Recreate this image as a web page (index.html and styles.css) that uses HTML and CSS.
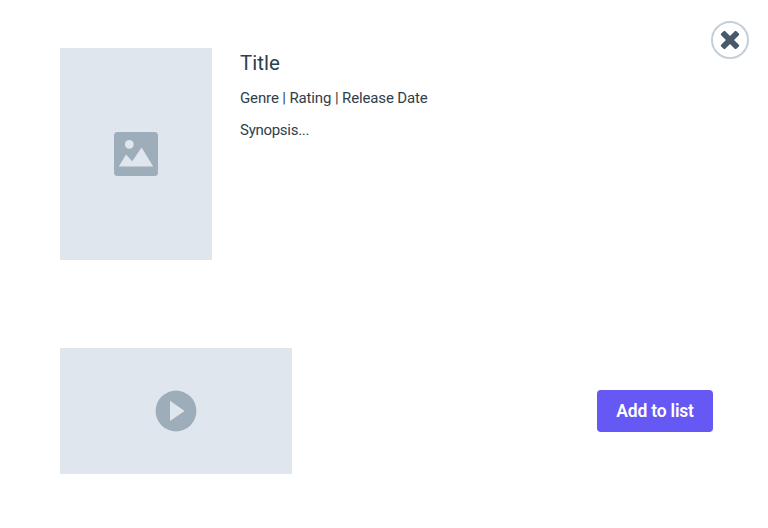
FILE: index.html
```html
<!DOCTYPE html>
<html lang="en">
<head>
<meta charset="utf-8">
<title>Title details</title>
<link rel="stylesheet" href="styles.css">
</head>
<body>
<main class="dialog">
  <button class="close" aria-label="Close">
    <svg width="38" height="38" viewBox="0 0 38 38"><circle cx="19" cy="19" r="18" fill="#fff" stroke="#c3cfd9" stroke-width="2"/><g fill="#485a69" transform="rotate(45 19 19)"><rect x="8.2" y="16.1" width="21.6" height="5.8" rx="1.2"/><rect x="16.1" y="8.2" width="5.8" height="21.6" rx="1.2"/></g></svg>
  </button>
  <section class="summary">
    <div class="poster">
      <svg width="44" height="44" viewBox="0 0 44 44"><rect width="44" height="44" rx="3.5" fill="#9dadb9"/><circle cx="15.3" cy="12.4" r="4.4" fill="#dfe6ee"/><path d="M4.8 34.4 12 22.5l6.2 6.8L27.6 15.5 39.2 34.4Z" fill="#dfe6ee"/></svg>
    </div>
    <div class="info">
      <h1 class="title">Title</h1>
      <p class="meta">Genre | Rating | Release Date</p>
      <p class="synopsis">Synopsis...</p>
    </div>
  </section>
  <section class="actions">
    <div class="trailer">
      <svg width="42" height="42" viewBox="0 0 42 42"><circle cx="21" cy="21" r="20.4" fill="#9dadb9"/><path d="M15 10.8V31L29.6 21Z" fill="#dfe6ee"/></svg>
    </div>
    <button class="add">Add to list</button>
  </section>
</main>
</body>
</html>
```
FILE: styles.css
```css
* { box-sizing: border-box; }
body {
  margin: 0;
  background: #fff;
  color: #2f3e4b;
  font-family: Roboto, "Liberation Sans", sans-serif;
}
svg { display: block; }
.dialog {
  position: relative;
  height: 528px;
  padding: 48px 55px 54px 60px;
  display: flex;
  flex-direction: column;
  justify-content: space-between;
}
.close {
  position: absolute;
  top: 21px;
  right: 19px;
  padding: 0;
  border: 0;
  background: none;
}
.summary { display: flex; gap: 28px; }
.poster, .trailer {
  display: flex;
  align-items: center;
  justify-content: center;
  background: #dfe6ee;
}
.poster { width: 152px; height: 212px; }
.trailer { width: 232px; height: 126px; }
.info { white-space: nowrap; }
.title {
  margin: 0;
  font-size: 20.5px;
  line-height: 30px;
  font-weight: 400;
  letter-spacing: 0;
}
.meta, .synopsis { margin: 0; font-size: 15px; line-height: 20px; }
.meta { margin-top: 10px; letter-spacing: -0.13px; }
.synopsis { margin-top: 12px; letter-spacing: -0.28px; }
.actions { display: flex; justify-content: space-between; align-items: center; }
.add {
  width: 116px;
  height: 42px;
  padding: 0;
  border: 0;
  border-radius: 4px;
  background: #6558f5;
  color: #fff;
  font-family: inherit;
  font-size: 17.5px;
  font-weight: 600;
  letter-spacing: -0.2px;
}
```
